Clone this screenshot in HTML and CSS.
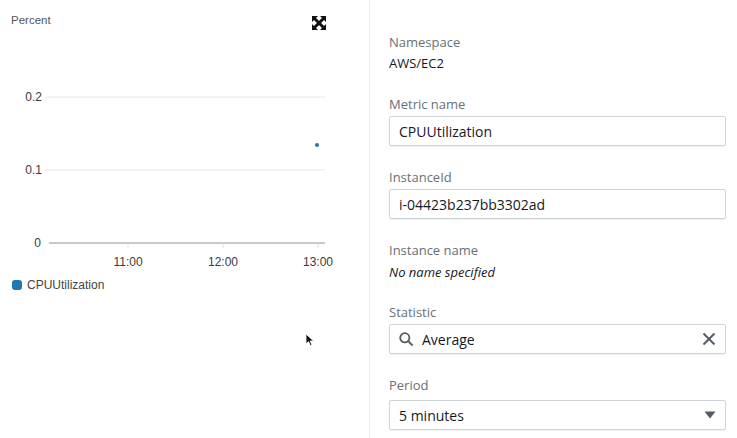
FILE: index.html
```html
<!DOCTYPE html>
<html>
<head>
<meta charset="utf-8">
<link rel="stylesheet" href="styles.css">
</head>
<body>
<div class="page">
  <section class="chart-panel">
    <svg class="chart" width="369" height="300" viewBox="0 0 369 300">
      <text class="axis-title" x="11" y="24">Percent</text>
      <g class="expand" transform="translate(312,16)">
        <polygon points="0,0 6,0 0,6" />
        <polygon points="14,0 8,0 14,6" />
        <polygon points="0,14 6,14 0,8" />
        <polygon points="14,14 8,14 14,8" />
        <line x1="2" y1="2" x2="12" y2="12" />
        <line x1="12" y1="2" x2="2" y2="12" />
      </g>
      <text class="tick" x="42" y="101" text-anchor="end">0.2</text>
      <text class="tick" x="42" y="174" text-anchor="end">0.1</text>
      <text class="tick" x="41" y="247" text-anchor="end">0</text>
      <line class="grid" x1="45" y1="97" x2="325" y2="97" />
      <line class="grid" x1="45" y1="170" x2="325" y2="170" />
      <line class="axis" x1="49" y1="243" x2="325" y2="243" />
      <line class="tickmark" x1="128" y1="243" x2="128" y2="248" />
      <line class="tickmark" x1="223" y1="243" x2="223" y2="248" />
      <line class="tickmark" x1="318" y1="243" x2="318" y2="248" />
      <text class="tick" x="128" y="266" text-anchor="middle">11:00</text>
      <text class="tick" x="223" y="266" text-anchor="middle">12:00</text>
      <text class="tick" x="318" y="266" text-anchor="middle">13:00</text>
      <circle class="point" cx="317" cy="145" r="2" />
    </svg>
    <div class="legend">
      <span class="swatch"></span>
      <span class="legend-label">CPUUtilization</span>
    </div>
    <svg class="cursor" width="10" height="14" viewBox="0 0 10 14">
      <path d="M1 1 L1 11 L3.5 8.6 L5.3 12.6 L6.9 11.9 L5.2 8 L8.6 8 Z" fill="#111" stroke="#fff" stroke-width="0.8"/>
    </svg>
  </section>
  <section class="form-panel">
    <div class="field first">
      <div class="label">Namespace</div>
      <div class="value">AWS/EC2</div>
    </div>
    <div class="field">
      <div class="label">Metric name</div>
      <div class="input">CPUUtilization</div>
    </div>
    <div class="field">
      <div class="label">InstanceId</div>
      <div class="input">i-04423b237bb3302ad</div>
    </div>
    <div class="field">
      <div class="label">Instance name</div>
      <div class="value italic">No name specified</div>
    </div>
    <div class="field">
      <div class="label">Statistic</div>
      <div class="input with-icons">
        <svg class="icon-search" width="14" height="14" viewBox="0 0 14 14">
          <circle cx="5.8" cy="5.8" r="4.6" fill="none" stroke="#545b64" stroke-width="1.8"/>
          <line x1="9.2" y1="9.2" x2="13" y2="13" stroke="#545b64" stroke-width="1.8" stroke-linecap="round"/>
        </svg>
        <span class="grow">Average</span>
        <svg class="icon-clear" width="14" height="14" viewBox="0 0 14 14">
          <line x1="1.5" y1="1.5" x2="12.5" y2="12.5" stroke="#545b64" stroke-width="2"/>
          <line x1="12.5" y1="1.5" x2="1.5" y2="12.5" stroke="#545b64" stroke-width="2"/>
        </svg>
      </div>
    </div>
    <div class="field">
      <div class="label period">Period</div>
      <div class="input with-icons">
        <span class="grow">5 minutes</span>
        <svg class="icon-caret" width="12" height="8" viewBox="0 0 12 8">
          <polygon points="0.5,0.5 11.5,0.5 6,7.5" fill="#545b64"/>
        </svg>
      </div>
    </div>
  </section>
</div>
</body>
</html>
```

FILE: styles.css
```css
html, body {
  margin: 0;
  padding: 0;
  background: #ffffff;
}

.page {
  display: flex;
  width: 737px;
  height: 438px;
  overflow: hidden;
}

.chart-panel {
  position: relative;
  width: 369px;
  flex: 0 0 369px;
  border-right: 1px solid #eaeded;
  font-family: "Liberation Sans", Arial, sans-serif;
}

.chart {
  display: block;
}

.axis-title {
  font-size: 11.5px;
  fill: #555;
}

.tick {
  font-size: 12px;
  fill: #3a3a3a;
}

.grid {
  stroke: #e8e8e8;
  stroke-width: 1;
}

.axis {
  stroke: #c8c8c8;
  stroke-width: 2;
}

.tickmark {
  stroke: #e0e0e0;
  stroke-width: 1;
}

.point {
  fill: #1f77b4;
}

.expand polygon {
  fill: #111;
}

.expand line {
  stroke: #111;
  stroke-width: 3;
}

.legend {
  display: flex;
  align-items: center;
  gap: 5px;
  margin-top: -22px;
  padding-left: 12px;
}

.swatch {
  width: 10px;
  height: 10px;
  border-radius: 3px;
  background: #1f77b4;
}

.legend-label {
  font-size: 12px;
  color: #444;
}

.cursor {
  position: absolute;
  left: 305px;
  top: 333px;
}

.form-panel {
  flex: 1;
  padding: 33px 11px 0 19px;
  font-family: "Open Sans", "Noto Sans", sans-serif;
  font-size: 13px;
}

.field {
  display: flex;
  flex-direction: column;
  margin-bottom: 22px;
}

.field.first {
  margin-bottom: 23px;
}

.label {
  color: #687078;
  line-height: 18px;
  margin-bottom: 3px;
}

.label.period {
  margin-bottom: 6px;
}

.value {
  color: #16191f;
  line-height: 18px;
  margin-top: 0;
}

.italic {
  font-style: italic;
  margin-top: 1px;
}

.input {
  box-sizing: border-box;
  height: 30px;
  border: 1px solid #cfd4d6;
  border-radius: 2px;
  box-shadow: 0 1px 1px rgba(0,0,0,0.06);
  padding: 0 9px;
  display: flex;
  align-items: center;
  color: #16191f;
  font-size: 14px;
}

.with-icons {
  gap: 9px;
}

.grow {
  flex: 1;
}
```
